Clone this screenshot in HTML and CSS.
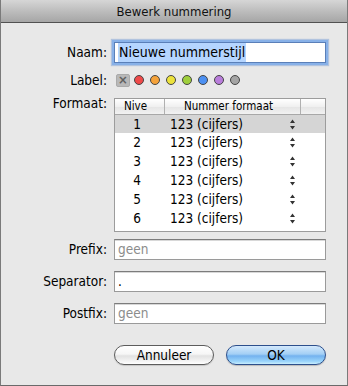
FILE: index.html
```html
<!DOCTYPE html>
<html>
<head>
<meta charset="utf-8">
<link rel="stylesheet" href="styles.css">
</head>
<body>
<div class="window">
  <div class="titlebar">Bewerk nummering</div>
  <div class="content">
    <div class="row row-naam">
      <div class="lbl">Naam:</div>
      <div class="field focus"><span class="sel">Nieuwe nummerstijl</span></div>
    </div>
    <div class="row row-label">
      <div class="lbl">Label:</div>
      <div class="swatches">
        <span class="xbox">×</span>
        <span class="dot red"></span>
        <span class="dot orange"></span>
        <span class="dot yellow"></span>
        <span class="dot green"></span>
        <span class="dot blue"></span>
        <span class="dot purple"></span>
        <span class="dot gray"></span>
      </div>
    </div>
    <div class="row row-formaat">
      <div class="lbl lbl-top">Formaat:</div>
      <div class="table">
        <div class="thead">
          <div class="th c1">Nive</div>
          <div class="th c2">Nummer formaat</div>
          <div class="th c3"></div>
        </div>
        <div class="tr selected"><div class="td c1">1</div><div class="td c2"><span>123 (cijfers)</span><svg class="step" width="5" height="11" viewBox="0 0 5 11"><path d="M2.5 0.5 L5 4 L0 4 Z M0 7 L5 7 L2.5 10.5 Z" fill="#333"/></svg></div><div class="td c3"></div></div>
        <div class="tr"><div class="td c1">2</div><div class="td c2"><span>123 (cijfers)</span><svg class="step" width="5" height="11" viewBox="0 0 5 11"><path d="M2.5 0.5 L5 4 L0 4 Z M0 7 L5 7 L2.5 10.5 Z" fill="#333"/></svg></div><div class="td c3"></div></div>
        <div class="tr"><div class="td c1">3</div><div class="td c2"><span>123 (cijfers)</span><svg class="step" width="5" height="11" viewBox="0 0 5 11"><path d="M2.5 0.5 L5 4 L0 4 Z M0 7 L5 7 L2.5 10.5 Z" fill="#333"/></svg></div><div class="td c3"></div></div>
        <div class="tr"><div class="td c1">4</div><div class="td c2"><span>123 (cijfers)</span><svg class="step" width="5" height="11" viewBox="0 0 5 11"><path d="M2.5 0.5 L5 4 L0 4 Z M0 7 L5 7 L2.5 10.5 Z" fill="#333"/></svg></div><div class="td c3"></div></div>
        <div class="tr"><div class="td c1">5</div><div class="td c2"><span>123 (cijfers)</span><svg class="step" width="5" height="11" viewBox="0 0 5 11"><path d="M2.5 0.5 L5 4 L0 4 Z M0 7 L5 7 L2.5 10.5 Z" fill="#333"/></svg></div><div class="td c3"></div></div>
        <div class="tr"><div class="td c1">6</div><div class="td c2"><span>123 (cijfers)</span><svg class="step" width="5" height="11" viewBox="0 0 5 11"><path d="M2.5 0.5 L5 4 L0 4 Z M0 7 L5 7 L2.5 10.5 Z" fill="#333"/></svg></div><div class="td c3"></div></div>
      </div>
    </div>
    <div class="row row-prefix">
      <div class="lbl">Prefix:</div>
      <div class="field placeholder">geen</div>
    </div>
    <div class="row row-sep">
      <div class="lbl">Separator:</div>
      <div class="field">.</div>
    </div>
    <div class="row row-post">
      <div class="lbl">Postfix:</div>
      <div class="field placeholder">geen</div>
    </div>
    <div class="row row-buttons">
      <div class="lbl"></div>
      <div class="buttons">
        <div class="btn btn-cancel">Annuleer</div>
        <div class="btn btn-ok">OK</div>
      </div>
    </div>
  </div>
</div>
</body>
</html>
```

FILE: styles.css
```css
html, body {
  margin: 0;
  padding: 0;
  background: #e8e8e8;
}
body {
  font-family: "DejaVu Sans Condensed", "DejaVu Sans", sans-serif;
  font-stretch: condensed;
  font-size: 13.5px;
  color: #000;
}
.window {
  width: 348px;
  height: 386px;
  box-sizing: border-box;
  border-left: 1px solid #7a7a7a;
  border-right: 1px solid #7a7a7a;
  border-bottom: 1px solid #6a6a6a;
  background: #e8e8e8;
  overflow: hidden;
}
.titlebar {
  height: 22px;
  line-height: 23px;
  text-align: center;
  font-size: 13px;
  color: #111;
  background: linear-gradient(#d6d6d6, #bdbdbd 50%, #a6a6a6);
  border-bottom: 1px solid #515151;
}
.content {
  display: flex;
  flex-direction: column;
  padding-top: 19px;
}
.row {
  display: flex;
  gap: 7px;
}
.lbl {
  width: 106px;
  flex: none;
  text-align: right;
  line-height: 21px;
}
.field {
  width: 212px;
  height: 21px;
  box-sizing: border-box;
  background: #fff;
  border: 1px solid #9a9a9a;
  border-top-color: #7c7c7c;
  box-shadow: inset 0 1px 0 #d8d8d8;
  line-height: 19px;
  padding-left: 3px;
}
.field.focus {
  border-color: #5a7fb8;
  box-shadow: 0 0 0 2px #88b1e8, 0 0 1px 3px rgba(110,150,210,0.45);
  font-size: 14px;
}
.sel {
  background: #b5d5ff;
  padding: 1px 1px 2px;
}
.placeholder {
  color: #8c8c8c;
}
.row-label {
  margin-top: 10px;
  height: 14px;
  align-items: center;
}
.row-label .lbl {
  line-height: 14px;
}
.swatches {
  display: flex;
  align-items: center;
  gap: 6px;
  padding-left: 2px;
}
.xbox {
  width: 14px;
  height: 13px;
  margin-right: -2px;
  box-sizing: border-box;
  border-radius: 2px;
  background: #b8b8b8;
  border: 1px solid #aaaaaa;
  color: #606060;
  font-size: 13px;
  font-weight: bold;
  line-height: 10px;
  text-align: center;
}
.dot {
  width: 10px;
  height: 10px;
  box-sizing: border-box;
  border-radius: 50%;
  border: 1px solid #454545;
}
.red { background: #ef4a4a; }
.orange { background: #f5a23a; }
.yellow { background: #ece23c; }
.green { background: #9fcf3c; }
.blue { background: #4c90f2; }
.purple { background: #b97ddb; }
.gray { background: #a4a4a4; }

.row-formaat {
  margin-top: 11px;
}
.lbl-top {
  line-height: 14px;
  margin-top: -2px;
}
.table {
  width: 212px;
  height: 134px;
  box-sizing: border-box;
  border: 1px solid #9c9c9c;
  background: #fff;
}
.thead {
  display: flex;
  height: 15px;
  border-bottom: 1px solid #a8a8a8;
  background: linear-gradient(#ffffff, #f0f0f0 50%, #e4e4e4 51%, #f2f2f2);
  font-size: 11.5px;
  line-height: 15px;
}
.th {
  box-sizing: border-box;
  border-right: 1px solid #b0b0b0;
  text-align: center;
  padding-right: 8px;
}
.c1 { width: 50px; flex: none; box-sizing: border-box; }
.c2 { width: 136px; flex: none; box-sizing: border-box; }
.c3 { flex: 1; }
.th.c3 { border-right: none; }
.tr {
  display: flex;
  height: 19px;
  line-height: 19px;
}
.tr.selected {
  background: #d5d5d5;
  height: 18px;
  line-height: 19px;
}
.td.c1 {
  text-align: center;
  padding-right: 6px;
}
.td.c2 {
  display: flex;
  align-items: center;
  justify-content: space-between;
  padding-left: 5px;
  padding-right: 6px;
}
.step {
  display: block;
}
.row-prefix {
  margin-top: 7px;
}
.row-sep, .row-post {
  margin-top: 11px;
}
.row-buttons {
  margin-top: 21px;
}
.buttons {
  display: flex;
  gap: 12px;
}
.btn {
  width: 100px;
  height: 20px;
  box-sizing: border-box;
  border-radius: 10px;
  text-align: center;
  line-height: 18px;
  font-size: 13.5px;
}
.btn-cancel {
  border: 1px solid #5c5c5c;
  background: linear-gradient(#ffffff, #f6f6f6 45%, #e2e2e2 55%, #f4f4f4 85%, #ffffff);
  box-shadow: 0 1px 1px rgba(0,0,0,0.15);
}
.btn-ok {
  border: 1px solid #2d4f8c;
  background: linear-gradient(#d4e9fc, #a3cff5 45%, #73b2ef 55%, #9ad4fb 85%, #c8eeff);
  box-shadow: 0 1px 1px rgba(0,0,0,0.2);
}
```
